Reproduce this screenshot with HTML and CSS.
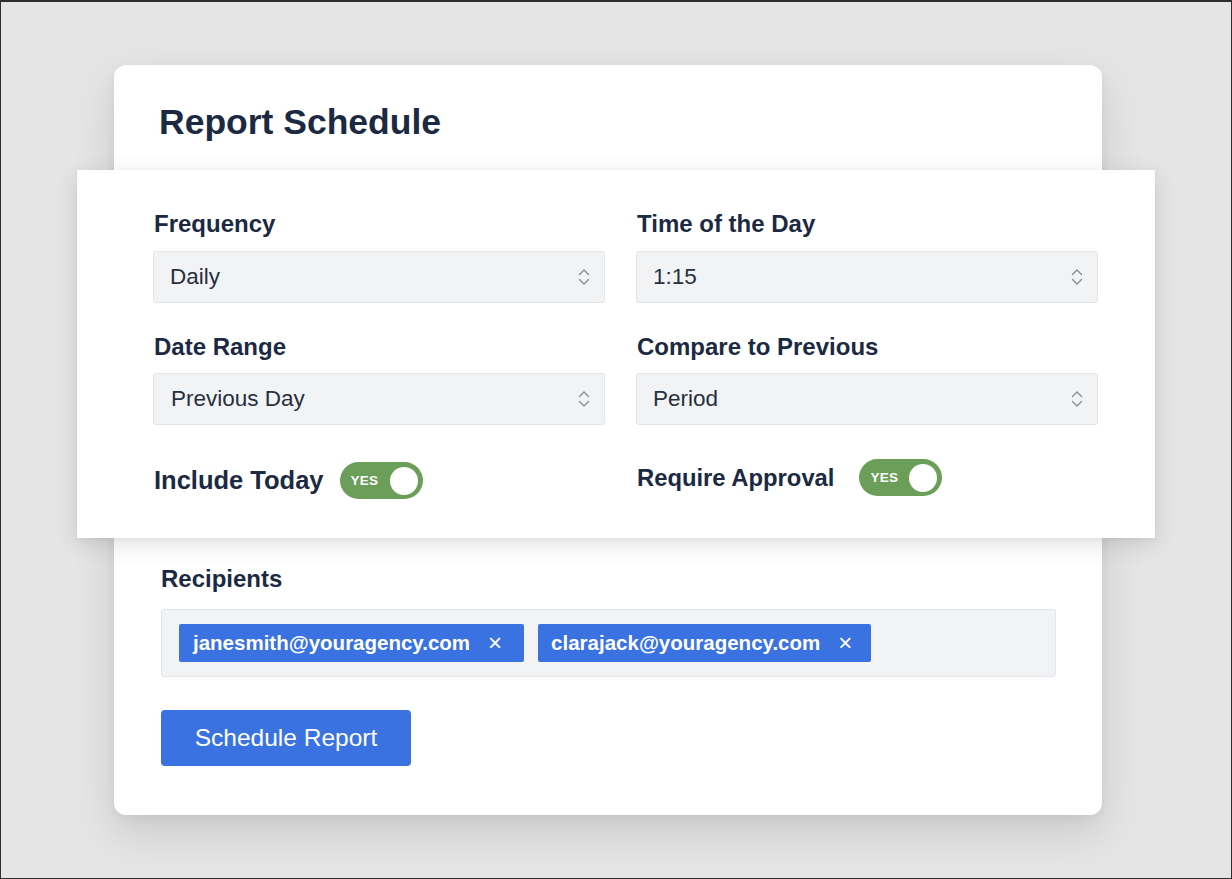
FILE: index.html
```html
<!DOCTYPE html>
<html>
<head>
<meta charset="utf-8">
<link rel="stylesheet" href="styles.css">
</head>
<body>
<div class="frame">
  <div class="card">
    <h1 class="title">Report Schedule</h1>
    <div class="panel">
      <div class="grid">
        <div class="field">
          <div class="label">Frequency</div>
          <div class="select"><span class="val">Daily</span><svg class="chev" viewBox="0 0 12 18" width="12" height="18"><path d="M1.5 6.5 L6 2 L10.5 6.5 M1.5 11.5 L6 16 L10.5 11.5" fill="none" stroke="#8a8d93" stroke-width="1.4" stroke-linecap="round" stroke-linejoin="round"/></svg></div>
        </div>
        <div class="field">
          <div class="label">Time of the Day</div>
          <div class="select"><span class="val">1:15</span><svg class="chev" viewBox="0 0 12 18" width="12" height="18"><path d="M1.5 6.5 L6 2 L10.5 6.5 M1.5 11.5 L6 16 L10.5 11.5" fill="none" stroke="#8a8d93" stroke-width="1.4" stroke-linecap="round" stroke-linejoin="round"/></svg></div>
        </div>
        <div class="field">
          <div class="label">Date Range</div>
          <div class="select"><span class="val val-indent">Previous Day</span><svg class="chev" viewBox="0 0 12 18" width="12" height="18"><path d="M1.5 6.5 L6 2 L10.5 6.5 M1.5 11.5 L6 16 L10.5 11.5" fill="none" stroke="#8a8d93" stroke-width="1.4" stroke-linecap="round" stroke-linejoin="round"/></svg></div>
        </div>
        <div class="field">
          <div class="label">Compare to Previous</div>
          <div class="select"><span class="val">Period</span><svg class="chev" viewBox="0 0 12 18" width="12" height="18"><path d="M1.5 6.5 L6 2 L10.5 6.5 M1.5 11.5 L6 16 L10.5 11.5" fill="none" stroke="#8a8d93" stroke-width="1.4" stroke-linecap="round" stroke-linejoin="round"/></svg></div>
        </div>
        <div class="toggle-row">
          <span class="toggle-label toggle-label-a">Include Today</span>
          <span class="toggle"><span class="yes">YES</span><span class="knob"></span></span>
        </div>
        <div class="toggle-row toggle-row-b">
          <span class="toggle-label toggle-label-b">Require Approval</span>
          <span class="toggle toggle-b"><span class="yes">YES</span><span class="knob"></span></span>
        </div>
      </div>
    </div>
    <div class="recipients">
      <div class="label">Recipients</div>
      <div class="tags">
        <span class="chip">janesmith@youragency.com<span class="x">×</span></span>
        <span class="chip">clarajack@youragency.com<span class="x">×</span></span>
      </div>
      <button class="btn">Schedule Report</button>
    </div>
  </div>
</div>
</body>
</html>
```

FILE: styles.css
```css
* { box-sizing: border-box; }
html, body { margin: 0; padding: 0; }
body {
  width: 1232px;
  height: 879px;
  overflow: hidden;
  font-family: "Liberation Sans", Arial, sans-serif;
  background: #e5e5e5;
}
.frame {
  width: 1232px;
  height: 879px;
  border: 1px solid #2e2e2e;
  border-top-width: 2px;
  background: #e5e5e5;
  padding-top: 63px;
  padding-left: 113px;
}
.card {
  width: 988px;
  height: 750px;
  background: #fff;
  border-radius: 12px;
  box-shadow: 0 18px 44px rgba(0,0,0,0.12), 0 4px 12px rgba(0,0,0,0.05);
}
.title {
  margin: 0;
  padding: 37px 0 0 45px;
  height: 105px;
  font-size: 35.5px;
  font-weight: 700;
  color: #1b2a42;
  line-height: 40px;
}
.panel {
  margin-left: -37px;
  margin-right: -53px;
  height: 368px;
  background: #fff;
  box-shadow: 0 6px 22px rgba(0,0,0,0.13), 0 1px 4px rgba(0,0,0,0.04);
  padding: 41px 0 0 76px;
}
.grid {
  display: grid;
  grid-template-columns: 452px 462px;
  column-gap: 31px;
  row-gap: 31px;
  align-items: start;
}
.label {
  font-size: 24px;
  font-weight: 700;
  color: #1b2a42;
  line-height: 26px;
  margin-left: 1px;
  margin-bottom: 14px;
}
.field:nth-child(3) .label,
.field:nth-child(4) .label { margin-bottom: 13px; }
.select {
  height: 52px;
  background: #f2f3f5;
  border: 1px solid #e3e5e8;
  border-radius: 3px;
  display: flex;
  align-items: center;
  justify-content: space-between;
  padding: 0 14px 0 16px;
}
.val {
  font-size: 22.5px;
  color: #27303d;
}
.val-indent { margin-left: 1px; }
.toggle-row {
  display: flex;
  align-items: center;
  margin-top: 6px;
}
.toggle-row-b { margin-top: 3px; }
.toggle-label {
  font-weight: 700;
  color: #1b2a42;
  margin-left: 1px;
}
.toggle-label-a { font-size: 25.5px; }
.toggle-label-b { font-size: 23.8px; }
.toggle {
  margin-left: 16px;
  width: 83px;
  height: 37px;
  border-radius: 19px;
  background: #6b9e58;
  display: flex;
  align-items: center;
  justify-content: space-between;
  padding: 0 5px 0 11px;
}
.toggle-b { margin-left: 25px; }
.yes {
  color: #fff;
  font-size: 13.5px;
  font-weight: 700;
  letter-spacing: 0.2px;
}
.knob {
  width: 28px;
  height: 28px;
  border-radius: 50%;
  background: #fff;
}
.recipients {
  padding: 28px 0 0 47px;
}
.recipients .label {
  margin-left: 0;
  margin-bottom: 17px;
}
.tags {
  width: 895px;
  height: 68px;
  background: #f2f3f5;
  border: 1px solid #e3e5e8;
  border-radius: 3px;
  display: flex;
  align-items: flex-start;
  gap: 14px;
  padding: 14px 0 0 17px;
}
.chip {
  height: 38px;
  background: #3a72e2;
  color: #fff;
  border-radius: 2px;
  font-size: 20.5px;
  font-weight: 700;
  display: flex;
  align-items: center;
  padding: 0 22px 0 14px;
}
.chip + .chip { padding: 0 19px 0 13px; }
.x {
  font-weight: 400;
  font-size: 24px;
  margin-left: 18px;
}
.btn {
  margin-top: 33px;
  width: 250px;
  height: 56px;
  background: #3a72e2;
  color: #fff;
  border: none;
  border-radius: 4px;
  font-family: "Liberation Sans", Arial, sans-serif;
  font-size: 24.5px;
  padding: 0;
}
```
